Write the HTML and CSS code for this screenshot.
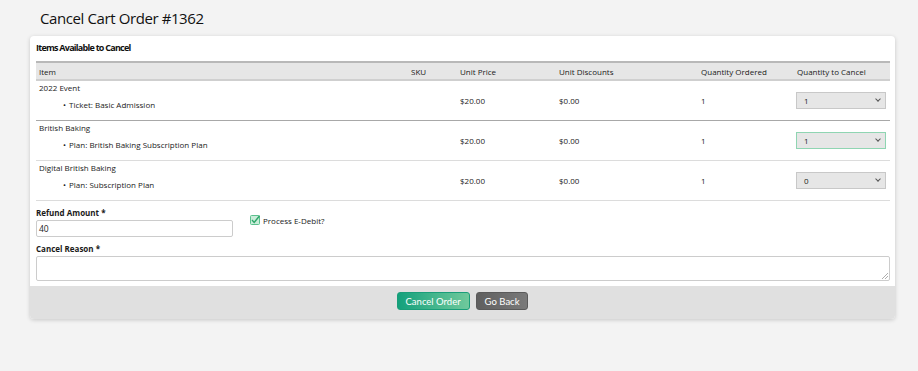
FILE: index.html
```html
<!DOCTYPE html>
<html lang="en">
<head>
  <meta charset="UTF-8" />
  <meta name="viewport" content="width=device-width, initial-scale=1" />
  <title>Cancel Cart Order #1362</title>
  <link rel="stylesheet" href="styles.css">
</head>
<body>

  <h1 class="page-title">Cancel Cart Order #1362</h1>

  <div class="card">
    <div class="card-body">
      <h2 class="section-title">Items Available to Cancel</h2>

      <table class="items-table">
        <thead>
          <tr>
            <th class="col-item">Item</th>
            <th class="col-sku">SKU</th>
            <th class="col-price">Unit Price</th>
            <th class="col-disc">Unit Discounts</th>
            <th class="col-qty">Quantity Ordered</th>
            <th class="col-cancel">Quantity to Cancel</th>
          </tr>
        </thead>
        <tbody>
          <tr class="first">
            <td class="item-cell">
              <div class="item-name">2022 Event</div>
              <ul class="item-list"><li>Ticket: Basic Admission</li></ul>
            </td>
            <td></td>
            <td>$20.00</td>
            <td>$0.00</td>
            <td>1</td>
            <td><div class="qty-select"><span>1</span><span class="chev"></span></div></td>
          </tr>
          <tr>
            <td class="item-cell">
              <div class="item-name">British Baking</div>
              <ul class="item-list"><li>Plan: British Baking Subscription Plan</li></ul>
            </td>
            <td></td>
            <td>$20.00</td>
            <td>$0.00</td>
            <td>1</td>
            <td><div class="qty-select focused"><span>1</span><span class="chev"></span></div></td>
          </tr>
          <tr>
            <td class="item-cell">
              <div class="item-name">Digital British Baking</div>
              <ul class="item-list"><li>Plan: Subscription Plan</li></ul>
            </td>
            <td></td>
            <td>$20.00</td>
            <td>$0.00</td>
            <td>1</td>
            <td><div class="qty-select"><span>0</span><span class="chev"></span></div></td>
          </tr>
        </tbody>
      </table>

      <div class="refund-row">
        <div class="field">
          <label class="field-label">Refund Amount *</label>
          <div class="text-input">40</div>
        </div>
        <div class="check">
          <span class="check-box">
            <svg width="10" height="10" viewBox="0 0 10 10">
              <rect x="0.5" y="0.5" width="9" height="9" rx="1" fill="#c9ecd9" stroke="#5cc08e" />
              <path d="M2 5 L4.2 7.4 L9.6 0.8" fill="none" stroke="#2fa66a" stroke-width="1.4" />
            </svg>
          </span>
          Process E-Debit?
        </div>
      </div>

      <label class="field-label reason-label">Cancel Reason *</label>
      <div class="text-area">
        <svg class="grip" width="6" height="6" viewBox="0 0 6 6">
          <path d="M6 0 L0 6 M6 3 L3 6" stroke="#999" stroke-width="0.8" />
        </svg>
      </div>
    </div>

    <div class="card-footer">
      <button class="btn btn-primary">Cancel Order</button>
      <button class="btn btn-secondary">Go Back</button>
    </div>
  </div>

</body>
</html>
```

FILE: styles.css
```css
/* Reset */
* {
  margin: 0;
  padding: 0;
  box-sizing: border-box;
}

body {
  font-family: 'Open Sans', 'Noto Sans', sans-serif;
  background: #f3f3f3;
  color: #1a1a1a;
  font-size: 8px;
  padding: 0 23px 0 30px;
  min-height: 100vh;
}

.page-title {
  font-size: 15px;
  font-weight: 400;
  letter-spacing: -0.4px;
  color: #111;
  padding: 8px 0 0 10px;
  height: 36px;
}

/* Card */
.card {
  background: #fff;
  border-radius: 4px;
  box-shadow: 0 1px 4px rgba(0, 0, 0, 0.18);
  overflow: hidden;
}

.card-body {
  padding: 6px 5px 5px 6px;
}

.section-title {
  font-size: 9px;
  font-weight: 700;
  letter-spacing: -0.75px;
  color: #111;
  height: 19px;
  line-height: 12px;
}

/* Tabela */
.items-table {
  width: 100%;
  border-collapse: collapse;
  table-layout: fixed;
}

.items-table th {
  background: #e6e6e6;
  font-weight: 400;
  text-align: left;
  height: 18px;
  padding: 0 3px;
  border-top: 2px solid #b8b8b8;
  border-bottom: 2px solid #cfcfcf;
}

.items-table td {
  padding: 0 3px;
  height: 40px;
  vertical-align: middle;
  border-bottom: 1px solid #dcdcdc;
}

.items-table td.item-cell {
  vertical-align: top;
  padding-top: 1px;
}

.items-table tr.first td {
  border-bottom: 1px solid #a8a8a8;
}

.col-item { width: 372px; }
.col-sku { width: 49px; }
.col-price { width: 99px; }
.col-disc { width: 142px; }
.col-qty { width: 96px; }

.item-name {
  line-height: 12px;
  margin-bottom: 5px;
}

.item-list {
  list-style: none;
  padding-left: 24px;
  line-height: 12px;
}

.item-list li::before {
  content: "•";
  margin-right: 3px;
}

.qty-select {
  display: flex;
  align-items: center;
  justify-content: space-between;
  width: 90px;
  height: 17px;
  margin-left: -1px;
  padding: 0 5px 0 7px;
  background: #e6e6e6;
  border: 1px solid #c8c8c8;
}

.qty-select.focused {
  border-color: #8fd5b2;
}

.chev {
  width: 4px;
  height: 4px;
  border-right: 1px solid #555;
  border-bottom: 1px solid #555;
  transform: rotate(45deg);
  margin-top: -2px;
}

/* Formulário */
.refund-row {
  display: flex;
  align-items: flex-start;
  margin-top: 6px;
}

.field-label {
  display: block;
  font-weight: 700;
  line-height: 12px;
  margin-bottom: 1px;
}

.reason-label {
  margin-top: 6px;
}

.text-input {
  width: 197px;
  height: 17px;
  border: 1px solid #ccc;
  border-radius: 2px;
  padding: 0 2px;
  line-height: 15px;
  font-size: 8.5px;
}

.check {
  display: flex;
  align-items: center;
  margin: 8px 0 0 17px;
  gap: 3px;
}

.check-box {
  display: flex;
}

.text-area {
  position: relative;
  height: 25px;
  border: 1px solid #ccc;
  border-radius: 2px;
}

.grip {
  position: absolute;
  right: 1px;
  bottom: 1px;
}

/* Rodapé */
.card-footer {
  background: #e0e0e0;
  height: 33px;
  display: flex;
  justify-content: center;
  align-items: center;
  gap: 6px;
  padding-bottom: 2px;
}

.btn {
  font-family: 'Lato', 'Open Sans', sans-serif;
  font-size: 9.5px;
  color: #fff;
  white-space: nowrap;
  border: none;
  border-radius: 3px;
  height: 18px;
  padding: 0 8px;
  cursor: pointer;
}

.btn-primary {
  background: linear-gradient(to right, #14a17c, #70c99c);
  border: 1px solid #1a9e79;
}

.btn-secondary {
  background: linear-gradient(to right, #5f5f5f, #7a7a7a);
  border: 1px solid #5a5a5a;
}
```
